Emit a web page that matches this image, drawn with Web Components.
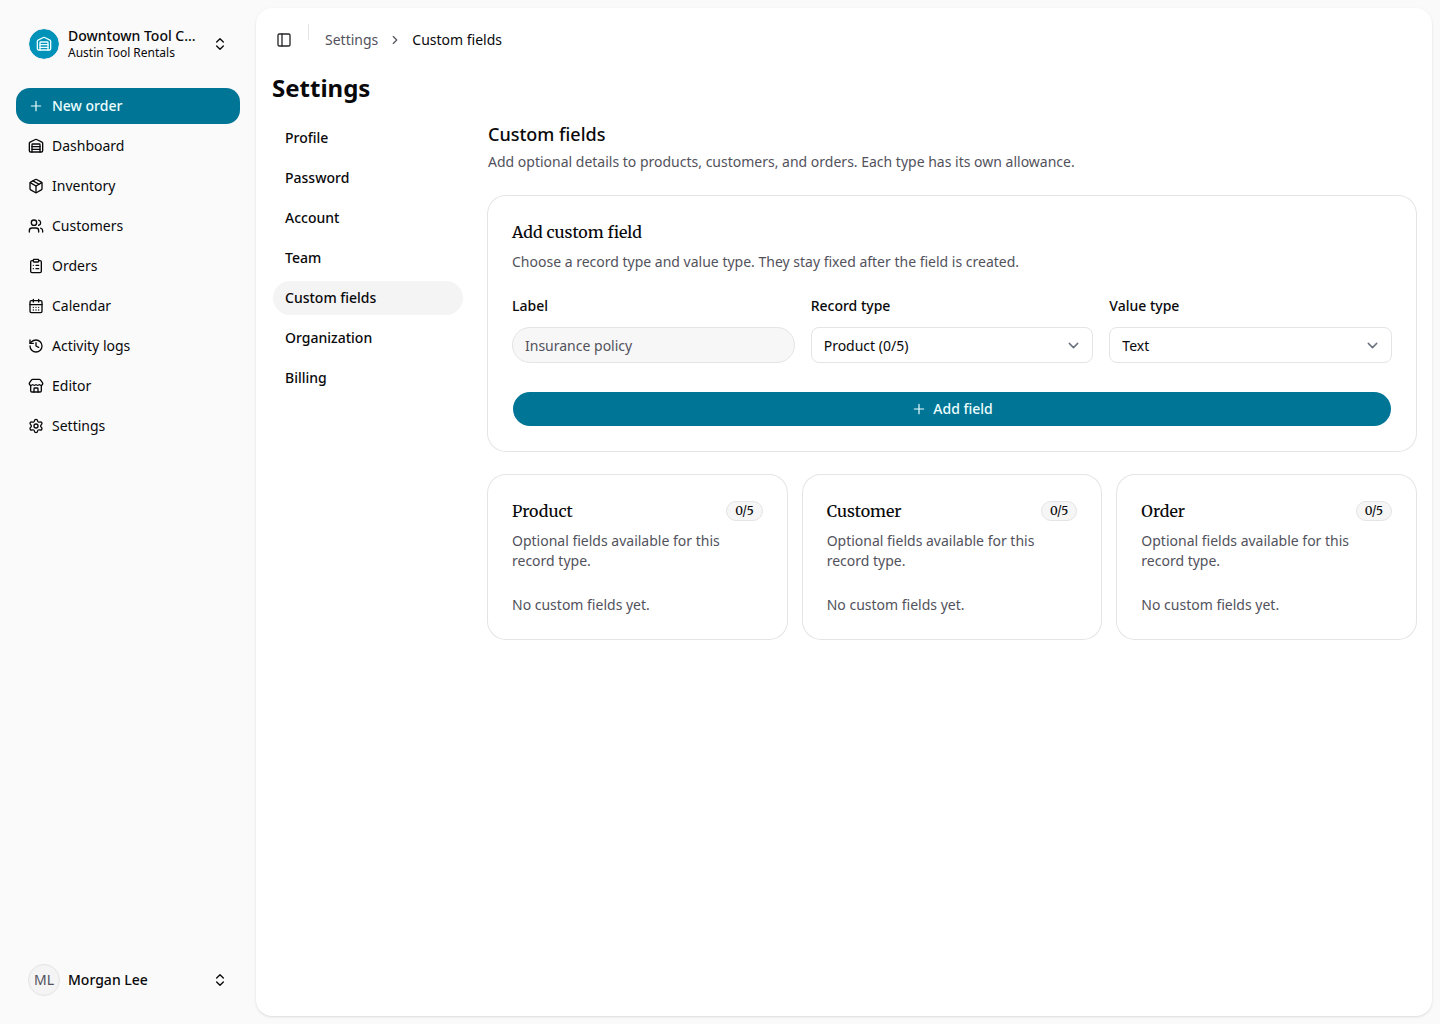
<!DOCTYPE html>
<html lang="en">
<head>
	<meta charset="UTF-8">
	<meta name="viewport" content="width=device-width, initial-scale=1.0">
	<title>Custom fields</title>
	<style>
		body {
			margin: 0;
			background: #fafafa;
			color: #09090b;
			font-family: 'Noto Sans', sans-serif;
			font-size: 14px;
			line-height: 20px;
			--primary: #007595;
			--muted: #52525c;
			--border: #e4e4e7;
			--serif: Merriweather, 'DejaVu Serif Condensed', 'DejaVu Serif', serif;
		}
	</style>
</head>
<body>
	<uc-app>
		<uc-sidebar slot="sidebar">
			<uc-account slot="header" name="Downtown Tool C…" detail="Austin Tool Rentals">
				<uc-avatar slot="avatar" brand><uc-icon name="warehouse"></uc-icon></uc-avatar>
			</uc-account>
			<uc-menu-item icon="plus" primary>New order</uc-menu-item>
			<uc-menu-item icon="warehouse">Dashboard</uc-menu-item>
			<uc-menu-item icon="package">Inventory</uc-menu-item>
			<uc-menu-item icon="users">Customers</uc-menu-item>
			<uc-menu-item icon="clipboard">Orders</uc-menu-item>
			<uc-menu-item icon="calendar">Calendar</uc-menu-item>
			<uc-menu-item icon="history">Activity logs</uc-menu-item>
			<uc-menu-item icon="store">Editor</uc-menu-item>
			<uc-menu-item icon="settings">Settings</uc-menu-item>
			<uc-account slot="footer" name="Morgan Lee">
				<uc-avatar slot="avatar">ML</uc-avatar>
			</uc-account>
		</uc-sidebar>
		<uc-breadcrumb parent="Settings">Custom fields</uc-breadcrumb>
		<uc-settings>
			<span slot="title">Settings</span>
			<uc-tab slot="nav">Profile</uc-tab>
			<uc-tab slot="nav">Password</uc-tab>
			<uc-tab slot="nav">Account</uc-tab>
			<uc-tab slot="nav">Team</uc-tab>
			<uc-tab slot="nav" active>Custom fields</uc-tab>
			<uc-tab slot="nav">Organization</uc-tab>
			<uc-tab slot="nav">Billing</uc-tab>
			<span slot="heading">Custom fields</span>
			<span slot="intro">Add optional details to products, customers, and orders. Each type has its own allowance.</span>
			<uc-card>
				<span slot="title">Add custom field</span>
				<span slot="description">Choose a record type and value type. They stay fixed after the field is created.</span>
				<uc-field-form></uc-field-form>
			</uc-card>
			<uc-card-grid>
				<uc-card>
					<span slot="title">Product</span>
					<uc-badge slot="badge">0/5</uc-badge>
					<span slot="description">Optional fields available for this record type.</span>
					No custom fields yet.
				</uc-card>
				<uc-card>
					<span slot="title">Customer</span>
					<uc-badge slot="badge">0/5</uc-badge>
					<span slot="description">Optional fields available for this record type.</span>
					No custom fields yet.
				</uc-card>
				<uc-card>
					<span slot="title">Order</span>
					<uc-badge slot="badge">0/5</uc-badge>
					<span slot="description">Optional fields available for this record type.</span>
					No custom fields yet.
				</uc-card>
			</uc-card-grid>
		</uc-settings>
	</uc-app>

	<script>
		const ICONS = {
			plus: '<path d="M5 12h14M12 5v14"/>',
			warehouse: '<path d="M18 21V10a1 1 0 0 0-1-1H7a1 1 0 0 0-1 1v11"/><path d="M22 19a2 2 0 0 1-2 2H4a2 2 0 0 1-2-2V8a2 2 0 0 1 1.132-1.803l7.95-3.974a2 2 0 0 1 1.837 0l7.948 3.974A2 2 0 0 1 22 8z"/><path d="M6 13h12M6 17h12"/>',
			package: '<path d="M11 21.73a2 2 0 0 0 2 0l7-4A2 2 0 0 0 21 16V8a2 2 0 0 0-1-1.73l-7-4a2 2 0 0 0-2 0l-7 4A2 2 0 0 0 3 8v8a2 2 0 0 0 1 1.73z"/><path d="M12 22V12"/><path d="M3.29 7 12 12l8.71-5"/><path d="m7.5 4.27 9 5.15"/>',
			users: '<path d="M16 21v-2a4 4 0 0 0-4-4H6a4 4 0 0 0-4 4v2"/><path d="M16 3.128a4 4 0 0 1 0 7.744"/><path d="M22 21v-2a4 4 0 0 0-3-3.87"/><circle cx="9" cy="7" r="4"/>',
			clipboard: '<rect width="8" height="4" x="8" y="2" rx="1"/><path d="M16 4h2a2 2 0 0 1 2 2v14a2 2 0 0 1-2 2H6a2 2 0 0 1-2-2V6a2 2 0 0 1 2-2h2"/><path d="M12 11h4M12 16h4M8 11h.01M8 16h.01"/>',
			calendar: '<path d="M8 2v4M16 2v4"/><rect width="18" height="18" x="3" y="4" rx="2"/><path d="M3 10h18"/><path d="M8 14h.01M12 14h.01M16 14h.01M8 18h.01M12 18h.01M16 18h.01"/>',
			history: '<path d="M3 12a9 9 0 1 0 9-9 9.75 9.75 0 0 0-6.74 2.74L3 8"/><path d="M3 3v5h5"/><path d="M12 7v5l4 2"/>',
			store: '<path d="M15 21v-5a1 1 0 0 0-1-1h-4a1 1 0 0 0-1 1v5"/><path d="M17.774 10.31a1.12 1.12 0 0 0-1.549 0 2.5 2.5 0 0 1-3.451 0 1.12 1.12 0 0 0-1.548 0 2.5 2.5 0 0 1-3.452 0 1.12 1.12 0 0 0-1.549 0 2.5 2.5 0 0 1-3.77-3.248l2.889-4.184A2 2 0 0 1 7 2h10a2 2 0 0 1 1.653.873l2.895 4.192a2.5 2.5 0 0 1-3.774 3.244"/><path d="M4 10.95V19a2 2 0 0 0 2 2h12a2 2 0 0 0 2-2v-8.05"/>',
			settings: '<path d="M9.671 4.136a2.34 2.34 0 0 1 4.659 0 2.34 2.34 0 0 0 3.319 1.915 2.34 2.34 0 0 1 2.33 4.033 2.34 2.34 0 0 0 0 3.831 2.34 2.34 0 0 1-2.33 4.033 2.34 2.34 0 0 0-3.319 1.915 2.34 2.34 0 0 1-4.659 0 2.34 2.34 0 0 0-3.32-1.915 2.34 2.34 0 0 1-2.33-4.033 2.34 2.34 0 0 0 0-3.831A2.34 2.34 0 0 1 6.35 6.051a2.34 2.34 0 0 0 3.319-1.915"/><circle cx="12" cy="12" r="3"/>',
			updown: '<path d="m7 15 5 5 5-5M7 9l5-5 5 5"/>',
			panel: '<rect width="18" height="18" x="3" y="3" rx="2"/><path d="M9 3v18"/>',
			right: '<path d="m9 18 6-6-6-6"/>',
			down: '<path d="m7.2 9.6 4.8 4.8 4.8-4.8"/>'
		};

		class Icon extends HTMLElement {
			constructor() {
				super();
				this.attachShadow({ mode: 'open' });
				this.shadowRoot.innerHTML = `
					<style>
						:host {
							display: block;
							flex: none;
							width: var(--icon-size, 16px);
							height: var(--icon-size, 16px);
						}

						svg {
							display: block;
							width: 100%;
							height: 100%;
							fill: none;
							stroke: currentColor;
							stroke-width: var(--icon-stroke, 2);
							stroke-linecap: round;
							stroke-linejoin: round;
						}
					</style>
					<svg viewBox="0 0 24 24">${ICONS[this.getAttribute('name')]}</svg>
				`;
			}
		}

		class App extends HTMLElement {
			constructor() {
				super();
				this.attachShadow({ mode: 'open' });
				this.shadowRoot.innerHTML = `
					<style>
						:host {
							display: grid;
							grid-template-columns: 256px 1fr;
							height: 100vh;
						}

						main {
							box-sizing: border-box;
							margin: 8px 8px 8px 0;
							padding: 16px;
							border-radius: 16px;
							background: white;
							box-shadow: 0 1px 3px rgba(0,0,0,0.1), 0 1px 2px -1px rgba(0,0,0,0.1);
						}
					</style>
					<slot name="sidebar"></slot>
					<main><slot></slot></main>
				`;
			}
		}

		class Sidebar extends HTMLElement {
			constructor() {
				super();
				this.attachShadow({ mode: 'open' });
				this.shadowRoot.innerHTML = `
					<style>
						:host {
							display: flex;
							flex-direction: column;
							box-sizing: border-box;
							padding: 16px;
						}

						nav {
							display: flex;
							flex: 1;
							flex-direction: column;
							gap: 4px;
							padding-top: 16px;
						}
					</style>
					<slot name="header"></slot>
					<nav><slot></slot></nav>
					<slot name="footer"></slot>
				`;
			}
		}

		class Account extends HTMLElement {
			constructor() {
				super();
				const detail = this.getAttribute('detail');
				this.attachShadow({ mode: 'open' });
				this.shadowRoot.innerHTML = `
					<style>
						:host {
							display: flex;
							align-items: center;
							gap: 8px;
							box-sizing: border-box;
							height: 56px;
							padding: 0 12px;
						}

						#text {
							flex: 1;
							min-width: 0;
							white-space: nowrap;
						}

						#name {
							font-weight: 500;
							line-height: 17.5px;
						}

						#detail {
							font-size: 12px;
							line-height: 16px;
						}
					</style>
					<slot name="avatar"></slot>
					<div id="text">
						<div id="name">${this.getAttribute('name')}</div>
						${detail ? `<div id="detail">${detail}</div>` : ''}
					</div>
					<uc-icon name="updown"></uc-icon>
				`;
			}
		}

		class Avatar extends HTMLElement {
			constructor() {
				super();
				this.attachShadow({ mode: 'open' });
				this.shadowRoot.innerHTML = `
					<style>
						:host {
							display: flex;
							flex: none;
							align-items: center;
							justify-content: center;
							box-sizing: border-box;
							width: 32px;
							height: 32px;
							border: 1px solid var(--border);
							border-radius: 50%;
							background: #f4f4f5;
							color: var(--muted);
						}

						:host([brand]) {
							border-color: #f4f4f5;
							background: #0092b8 padding-box;
							color: #ecfeff;
						}
					</style>
					<slot></slot>
				`;
			}
		}

		class MenuItem extends HTMLElement {
			constructor() {
				super();
				this.attachShadow({ mode: 'open' });
				this.shadowRoot.innerHTML = `
					<style>
						:host {
							display: flex;
							align-items: center;
							gap: 8px;
							box-sizing: border-box;
							height: 36px;
							padding: 0 12px;
							border-radius: 14px;
						}

						:host([primary]) {
							background: var(--primary);
							color: #ecfeff;
							font-weight: 500;
							--icon-stroke: 1.8;
						}
					</style>
					<uc-icon name="${this.getAttribute('icon')}"></uc-icon>
					<slot></slot>
				`;
			}
		}

		class Breadcrumb extends HTMLElement {
			constructor() {
				super();
				this.attachShadow({ mode: 'open' });
				this.shadowRoot.innerHTML = `
					<style>
						:host {
							display: flex;
							align-items: center;
							height: 32px;
						}

						#toggle {
							padding: 0 4px;
							color: #27272a;
						}

						#divider {
							align-self: flex-start;
							width: 1px;
							height: 16px;
							margin: 0 16px 0 12px;
							background: var(--border);
						}

						#parent,
						#chevron {
							color: var(--muted);
						}

						#chevron {
							--icon-size: 14px;
							margin: 0 10px;
						}
					</style>
					<uc-icon id="toggle" name="panel"></uc-icon>
					<div id="divider"></div>
					<span id="parent">${this.getAttribute('parent')}</span>
					<uc-icon id="chevron" name="right"></uc-icon>
					<span><slot></slot></span>
				`;
			}
		}

		class Settings extends HTMLElement {
			constructor() {
				super();
				this.attachShadow({ mode: 'open' });
				this.shadowRoot.innerHTML = `
					<style>
						:host {
							display: block;
						}

						h1 {
							margin: 16px 0;
							font-size: 24px;
							line-height: 32px;
							font-weight: 700;
						}

						#layout {
							display: grid;
							grid-template-columns: 192px 1fr;
							gap: 24px;
						}

						nav {
							display: flex;
							flex-direction: column;
							gap: 4px;
						}

						section {
							display: flex;
							flex-direction: column;
							gap: 24px;
						}

						h2 {
							margin: 0 0 4px;
							font-size: 18px;
							line-height: 28px;
							font-weight: 500;
						}

						p {
							margin: 0;
							color: var(--muted);
						}
					</style>
					<h1><slot name="title"></slot></h1>
					<div id="layout">
						<nav><slot name="nav"></slot></nav>
						<section>
							<header>
								<h2><slot name="heading"></slot></h2>
								<p><slot name="intro"></slot></p>
							</header>
							<slot></slot>
						</section>
					</div>
				`;
			}
		}

		class Tab extends HTMLElement {
			constructor() {
				super();
				this.attachShadow({ mode: 'open' });
				this.shadowRoot.innerHTML = `
					<style>
						:host {
							display: block;
							padding: 7px 12px;
							border: 1px solid transparent;
							border-radius: 18px;
							background-clip: padding-box;
							font-weight: 500;
						}

						:host([active]) {
							background-color: #f4f4f5;
						}
					</style>
					<slot></slot>
				`;
			}
		}

		class Card extends HTMLElement {
			constructor() {
				super();
				this.attachShadow({ mode: 'open' });
				this.shadowRoot.innerHTML = `
					<style>
						:host {
							display: block;
							padding: 24px;
							border-radius: 18px;
							background: white;
							box-shadow: 0 0 0 1px var(--border);
						}

						header {
							display: flex;
							align-items: center;
							justify-content: space-between;
							height: 24px;
							font-family: var(--serif);
							font-size: 16px;
							font-weight: 500;
							line-height: 24px;
						}

						p {
							margin: 8px 0 24px;
						}

						p,
						#body {
							color: var(--muted);
						}
					</style>
					<header>
						<slot name="title"></slot>
						<slot name="badge"></slot>
					</header>
					<p><slot name="description"></slot></p>
					<div id="body"><slot></slot></div>
				`;
			}
		}

		class CardGrid extends HTMLElement {
			constructor() {
				super();
				this.attachShadow({ mode: 'open' });
				this.shadowRoot.innerHTML = `
					<style>
						:host {
							display: grid;
							grid-template-columns: repeat(3, 1fr);
							gap: 16px;
						}
					</style>
					<slot></slot>
				`;
			}
		}

		class Badge extends HTMLElement {
			constructor() {
				super();
				this.attachShadow({ mode: 'open' });
				this.shadowRoot.innerHTML = `
					<style>
						:host {
							display: block;
							box-sizing: border-box;
							height: 20px;
							padding: 0 8px;
							border: 1px solid var(--border);
							border-radius: 10px;
							background: #f6f6f6;
							font-size: 12px;
							line-height: 18px;
						}
					</style>
					<slot></slot>
				`;
			}
		}

		class FieldForm extends HTMLElement {
			constructor() {
				super();
				this.attachShadow({ mode: 'open' });
				this.shadowRoot.innerHTML = `
					<style>
						:host {
							display: block;
							color: #09090b;
						}

						#fields {
							display: grid;
							grid-template-columns: repeat(3, 1fr);
							gap: 16px;
							margin-bottom: 28px;
						}

						label {
							display: block;
							margin-bottom: 11px;
							font-weight: 500;
						}

						.control {
							display: flex;
							align-items: center;
							justify-content: space-between;
							box-sizing: border-box;
							height: 36px;
							padding: 1px 8px 0 12px;
							border: 1px solid var(--border);
							border-radius: 8px;
							--icon-size: 21px;
							--icon-stroke: 1.7;
						}

						.control uc-icon {
							margin-bottom: 1px;
							color: #6b7280;
						}

						.control.input {
							border-radius: 18px;
							background: #f7f7f7;
							color: var(--muted);
						}

						#submit {
							display: flex;
							align-items: center;
							justify-content: center;
							gap: 6px;
							height: 34px;
							border: 1px solid transparent;
							border-radius: 18px;
							background: var(--primary) padding-box;
							color: #ecfeff;
							font-weight: 500;
							--icon-stroke: 1.8;
						}
					</style>
					<div id="fields">
						<div>
							<label>Label</label>
							<div class="control input">Insurance policy</div>
						</div>
						<div>
							<label>Record type</label>
							<div class="control">Product (0/5)<uc-icon name="down"></uc-icon></div>
						</div>
						<div>
							<label>Value type</label>
							<div class="control">Text<uc-icon name="down"></uc-icon></div>
						</div>
					</div>
					<div id="submit"><uc-icon name="plus"></uc-icon>Add field</div>
				`;
			}
		}

		customElements.define('uc-icon', Icon);
		customElements.define('uc-app', App);
		customElements.define('uc-sidebar', Sidebar);
		customElements.define('uc-account', Account);
		customElements.define('uc-avatar', Avatar);
		customElements.define('uc-menu-item', MenuItem);
		customElements.define('uc-breadcrumb', Breadcrumb);
		customElements.define('uc-settings', Settings);
		customElements.define('uc-tab', Tab);
		customElements.define('uc-card', Card);
		customElements.define('uc-card-grid', CardGrid);
		customElements.define('uc-badge', Badge);
		customElements.define('uc-field-form', FieldForm);
	</script>
</body>
</html>
